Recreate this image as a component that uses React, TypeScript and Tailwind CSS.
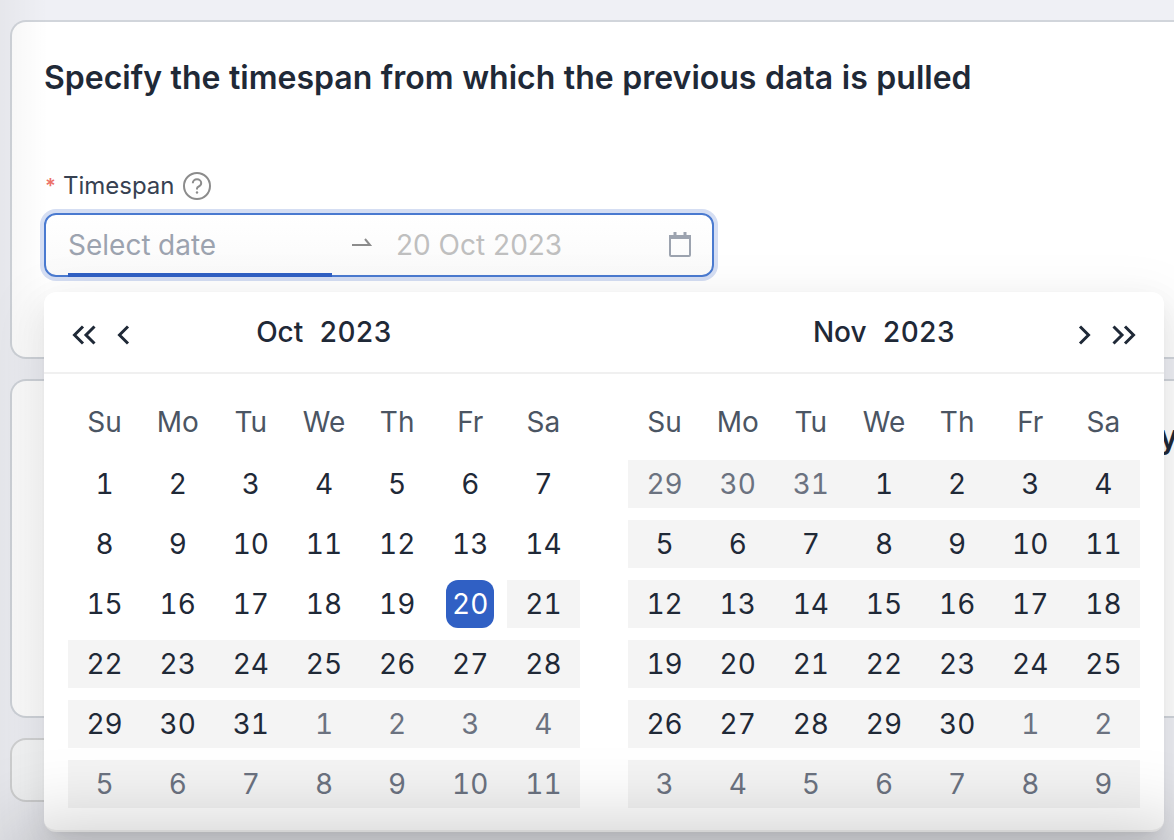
import { useState } from 'react';

type Day = { day: number; outside: boolean; offset: number };

const weekdays = ['Su', 'Mo', 'Tu', 'We', 'Th', 'Fr', 'Sa'];

// offset = days since 1 Oct 2023, so both panels can share one range
const buildWeeks = (startOffset: number, monthStart: number, monthLength: number): Day[][] =>
    Array.from({ length: 6 }, (_, w) =>
        Array.from({ length: 7 }, (_, d) => {
            const offset = startOffset + w * 7 + d;
            const date = new Date(2023, 9, 1 + offset);
            return {
                day: date.getDate(),
                outside: offset < monthStart || offset >= monthStart + monthLength,
                offset,
            };
        })
    );

const october = buildWeeks(0, 0, 31);
const november = buildWeeks(28, 31, 30);

function Chevron({ double = false, right = false }: { double?: boolean; right?: boolean }) {
    return (
        <svg
            width={double ? 26 : 14}
            height="22"
            viewBox={double ? '0 0 26 22' : '0 0 14 22'}
            fill="none"
            stroke="currentColor"
            strokeWidth="3"
            className={right ? 'rotate-180' : ''}
            aria-hidden="true"
        >
            <path d="M11 2.500 2.500 11l8.500 8.500" />
            {double && <path d="M22.500 2.500 14 11l8.500 8.500" />}
        </svg>
    );
}

function Month({ name, weeks, selected, onSelect }: {
    name: string;
    weeks: Day[][];
    selected: number;
    onSelect: (offset: number) => void;
}) {
    const cellStyle = (d: Day) => {
        if (d.offset === selected && !d.outside) return 'w-12 mx-auto rounded-xl bg-[#3060c4] text-white';
        const tone = d.outside ? 'text-[#6b7280]' : 'text-[#1f2937]';
        return d.offset > 19 ? `w-full bg-[#f4f4f4] ${tone}` : `w-full ${tone}`;
    };

    return (
        <div className="flex-1 px-6 py-4">
            <table aria-label={name} className="w-full table-fixed border-collapse">
                <thead>
                    <tr>
                        {weekdays.map((w) => (
                            <th key={w} scope="col" className="h-16 p-0 text-center font-normal text-[#4b5563]">{w}</th>
                        ))}
                    </tr>
                </thead>
                <tbody>
                    {weeks.map((week, i) => (
                        <tr key={i}>
                            {week.map((d) => (
                                <td key={d.offset} className="h-15 p-0">
                                    <button
                                        type="button"
                                        onClick={() => onSelect(d.offset)}
                                        className={`block h-12 text-center ${cellStyle(d)}`}
                                    >
                                        {d.day}
                                    </button>
                                </td>
                            ))}
                        </tr>
                    ))}
                </tbody>
            </table>
        </div>
    );
}

export default function App() {
    const [selected, setSelected] = useState(19);
    const card = 'border-2 border-r-0 border-[#d1d5db] bg-white rounded-l-2xl';

    return (
        <div className="relative flex min-h-screen flex-col gap-5 overflow-hidden bg-[#eff0f5] pt-5 pl-2.5 font-['Inter',sans-serif] text-[28px] leading-10 tabular-nums text-[#1f2937]">
            <section className={`${card} h-[339px] px-8 pt-9`}>
                <h2 className="text-[32px] font-semibold">Specify the timespan from which the previous data is pulled</h2>

                <div className="mt-14 flex h-16 items-center text-2xl text-[#374151]">
                    <span className="mr-1.5 text-xl font-semibold text-[#ec7168]" aria-hidden="true">*</span>
                    <label htmlFor="start">Timespan</label>
                    <svg className="ml-2" width="28" height="28" viewBox="0 0 28 28" fill="none" stroke="#8c8c8c" strokeWidth="2" aria-hidden="true">
                        <circle cx="14" cy="14" r="13" />
                        <path d="M9.800 11.300c0-2.300 1.800-4 4.200-4s4.200 1.600 4.200 3.800c0 1.700-1 2.800-2.400 3.400-1.200.5-1.800 1.200-1.800 2.300v.7" />
                        <circle cx="14" cy="20.500" r="1.200" fill="#8c8c8c" stroke="none" />
                    </svg>
                </div>

                <div className="relative z-10 -mt-[5px] w-max">
                    <div className="flex h-16 items-center rounded-xl border-2 border-[#4a7ad0] bg-linear-to-b from-white to-[#fafafa] pr-5 pl-[22px] ring-4 ring-[#d5def3]">
                        <div className="flex h-16 w-66 items-center border-b-4 border-[#3060c4] pt-1">
                            <input id="start" placeholder="Select date" className="w-full bg-transparent outline-none placeholder:text-[#9ca3af]" />
                        </div>
                        <svg className="mx-5" width="24" height="24" viewBox="0 0 24 24" fill="none" stroke="#8c8c8c" strokeWidth="2" aria-hidden="true">
                            <path d="M0 12h18l-5-6" />
                        </svg>
                        <input aria-label="End date" placeholder="20 Oct 2023" className="w-66 bg-transparent normal-nums outline-none placeholder:text-[#bfbfbf]" />
                        <svg className="ml-2" width="24" height="28" viewBox="0 0 24 28" fill="none" stroke="#9ca3af" strokeWidth="2" aria-hidden="true">
                            <rect x="2" y="5" width="20" height="20" rx="1" />
                            <path d="M1 6h22" strokeWidth="4" />
                            <path d="M7 1v5M17 1v5" strokeWidth="3" />
                        </svg>
                    </div>

                    <div
                        role="dialog"
                        aria-label="Choose date range"
                        className="absolute top-[79px] left-0 w-280 rounded-xl border-b-2 border-[#f0f0f0] bg-white shadow-[0_12px_32px_rgba(0,0,0,0.08),0_6px_12px_-8px_rgba(0,0,0,0.12),0_18px_56px_16px_rgba(0,0,0,0.05)]"
                    >
                        <div className="flex border-b-2 border-[#f0f0f0] font-medium">
                            <div className="grid h-20 flex-1 grid-cols-[1fr_auto_1fr] items-center px-7">
                                <div className="flex items-center gap-[19px] pt-1.5">
                                    <button type="button" aria-label="Previous year"><Chevron double /></button>
                                    <button type="button" aria-label="Previous month"><Chevron /></button>
                                </div>
                                <div className="flex gap-4">
                                    <button type="button">Oct</button>
                                    <button type="button">2023</button>
                                </div>
                            </div>
                            <div className="grid h-20 flex-1 grid-cols-[1fr_auto_1fr] items-center px-7">
                                <div className="col-start-2 flex gap-4">
                                    <button type="button">Nov</button>
                                    <button type="button">2023</button>
                                </div>
                                <div className="flex items-center justify-end gap-[19px] pt-1.5">
                                    <button type="button" aria-label="Next month"><Chevron right /></button>
                                    <button type="button" aria-label="Next year"><Chevron double right /></button>
                                </div>
                            </div>
                        </div>
                        <div className="flex">
                            <Month name="October 2023" weeks={october} selected={selected} onSelect={setSelected} />
                            <Month name="November 2023" weeks={november} selected={selected} onSelect={setSelected} />
                        </div>
                    </div>
                </div>
            </section>

            <section className={`${card} h-[339px] pt-9`}>
                <h2 className="-mr-1 text-right text-[32px] font-semibold">y</h2>
            </section>

            <section className="h-16 w-40 rounded-2xl border-2 border-[#d4d5d6] bg-[#f7f8f9]" />

            {/* shadow cast upwards by the bar below the fold */}
            <div className="pointer-events-none absolute top-full right-0 left-6 z-20 h-40 shadow-[0_0_80px_12px_rgba(0,0,0,0.22)]" />
            <div className="pointer-events-none absolute inset-y-0 left-0 w-12 bg-linear-to-r from-black/4 to-transparent" />
        </div>
    );
}
